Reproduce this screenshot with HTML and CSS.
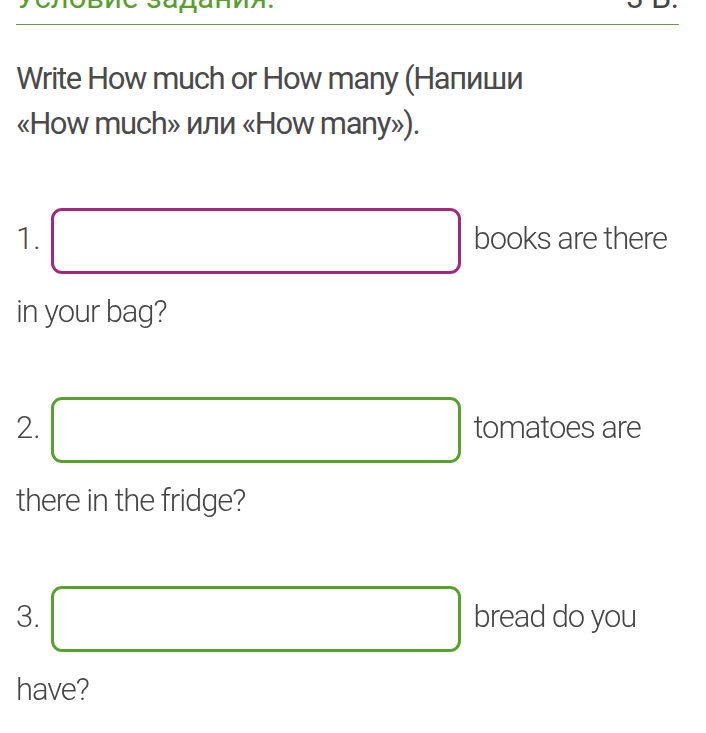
FILE: index.html
```html
<!DOCTYPE html>
<html lang="ru">
<head>
    <meta charset="UTF-8">
    <meta name="viewport" content="width=device-width, initial-scale=1.0">
    <title>Условие задания</title>
    <link rel="stylesheet" href="styles.css">
</head>
<body>
    <div class="task">
        <div class="task-head">
            <span class="task-title">Условие задания:</span>
            <span class="task-points">3 Б.</span>
        </div>
        <p class="task-text">Write How much or How many (Напиши «How much» или «How many»).</p>
        <p class="item"><span class="num">1.</span> <input type="text" class="answer active" autofocus> books are there in your bag?</p>
        <p class="item"><span class="num">2.</span> <input type="text" class="answer"> tomatoes are there in the fridge?</p>
        <p class="item"><span class="num">3.</span> <input type="text" class="answer"> bread do you have?</p>
    </div>
</body>
</html>
```
FILE: styles.css
```css
body {
    margin: 0;
    background: #ffffff;
    font-family: Roboto, "Noto Sans", sans-serif;
    color: #464646;
}

.task {
    width: 663px;
    padding-left: 16px;
}

.task-head {
    display: flex;
    justify-content: space-between;
    align-items: flex-end;
    margin-top: -35px;
    height: 53px;
    padding-bottom: 6px;
    border-bottom: 1px solid #6a9a4a;
    font-size: 31px;
    line-height: 40px;
}

.task-title {
    color: #5a9e2f;
}

.task-points {
    color: #444444;
}

.task-text {
    margin: 31px 0 56px;
    width: 530px;
    font-size: 31px;
    line-height: 45px;
    letter-spacing: -1.4px;
    color: #4a4a4a;
}

.item {
    margin: 0 0 43px;
    font-size: 31px;
    font-weight: 300;
    line-height: 73px;
    letter-spacing: -1.1px;
}

.num {
    letter-spacing: 0;
}

.answer {
    box-sizing: border-box;
    width: 410px;
    height: 66px;
    margin: 0 6px 0 4px;
    padding: 0 8px;
    vertical-align: middle;
    border: 3px solid #5aa02c;
    border-radius: 11px;
    outline: none;
    font-family: Roboto, sans-serif;
    font-size: 34px;
    color: #444444;
    caret-color: #444444;
}

.answer.active {
    border-color: #a3277c;
}
```
